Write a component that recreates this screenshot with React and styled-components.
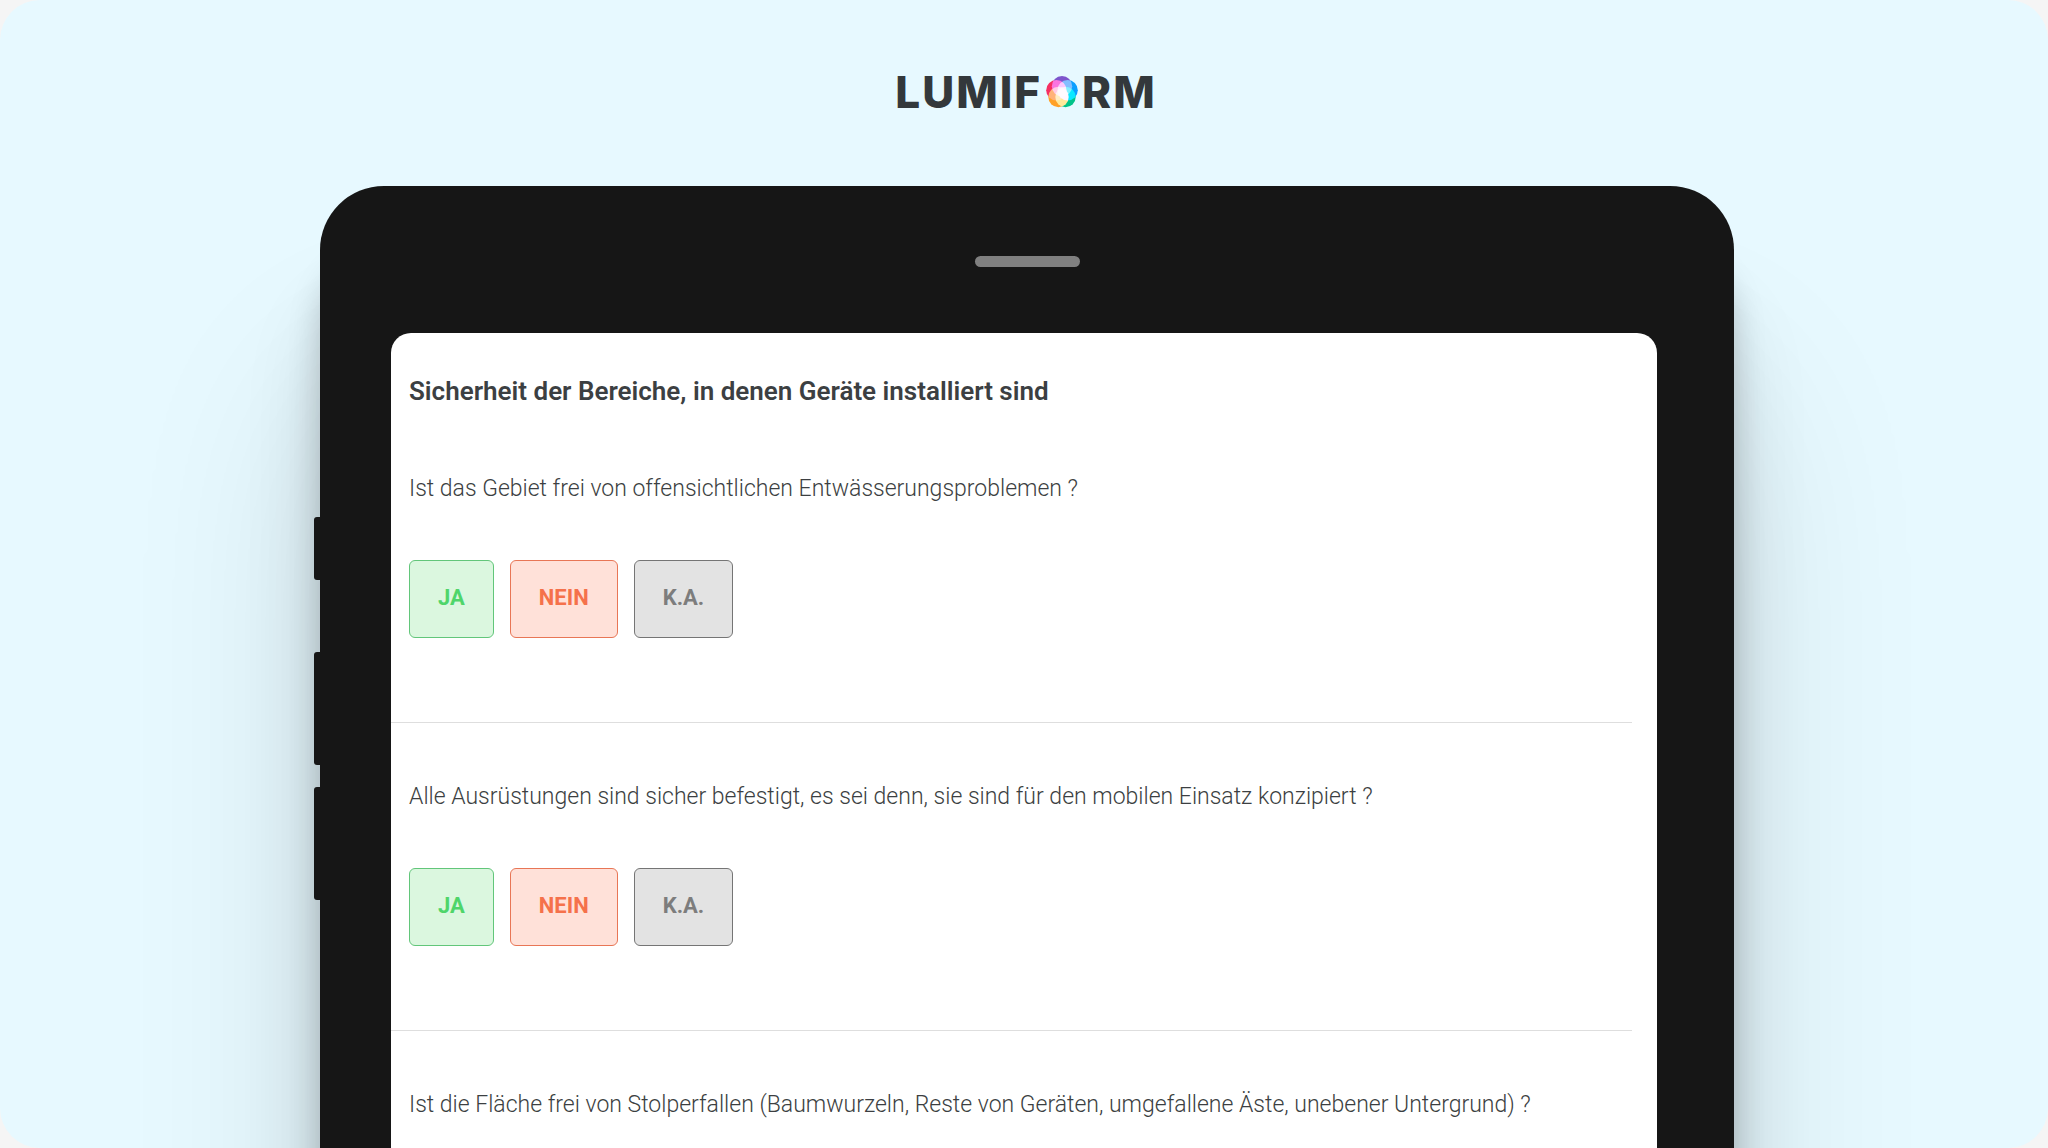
import styled, { createGlobalStyle } from "styled-components";

const questions = [
  "Ist das Gebiet frei von offensichtlichen Entwässerungsproblemen ?",
  "Alle Ausrüstungen sind sicher befestigt, es sei denn, sie sind für den mobilen Einsatz konzipiert ?",
  "Ist die Fläche frei von Stolperfallen (Baumwurzeln, Reste von Geräten, umgefallene Äste, unebener Untergrund) ?",
];

const answers = [
  { label: "JA", color: "#4fd56a", border: "#62c67a", background: "#dbf7df" },
  { label: "NEIN", color: "#f5714b", border: "#e87656", background: "#ffe1d9" },
  { label: "K.A.", color: "#7d7d7d", border: "#757575", background: "#e3e3e3" },
];

const petals = [
  { cx: 16, cy: 10.2, fill: "#7d55cc" },
  { cx: 21.6, cy: 14.2, fill: "#0a9eff" },
  { cx: 19.5, cy: 21, fill: "#00c389" },
  { cx: 12.5, cy: 21, fill: "#ffa126" },
  { cx: 10.4, cy: 14.2, fill: "#f52f62" },
];

function LogoMark() {
  return (
    <Mark viewBox="0 0 32 32" aria-hidden="true">
      {petals.map((petal) => (
        <circle key={petal.fill} r="10.2" {...petal} />
      ))}
    </Mark>
  );
}

function Question({ text, showAnswers }) {
  return (
    <QuestionBlock>
      <QuestionText>{text}</QuestionText>

      {showAnswers && (
        <Answers>
          {answers.map((answer) => (
            <AnswerButton
              key={answer.label}
              type="button"
              $color={answer.color}
              $border={answer.border}
              $background={answer.background}
            >
              {answer.label}
            </AnswerButton>
          ))}
        </Answers>
      )}
    </QuestionBlock>
  );
}

export default function App() {
  return (
    <>
      <GlobalStyle />

      <Stage>
        <Logo>
          <span>LUMIF</span>
          <LogoMark />
          <span>RM</span>
        </Logo>

        <Tablet>
          <SideKeys>
            <SideKey $height={63} />
            <SideKey $height={113} $gap={72} />
            <SideKey $height={113} $gap={22} />
          </SideKeys>

          <Speaker />

          <Screen>
            <Title>Sicherheit der Bereiche, in denen Geräte installiert sind</Title>

            {questions.map((text, index) => (
              <Question
                key={text}
                text={text}
                showAnswers={index < questions.length - 1}
              />
            ))}
          </Screen>
        </Tablet>
      </Stage>
    </>
  );
}

const GlobalStyle = createGlobalStyle`
  * {
    box-sizing: border-box;
  }

  body {
    margin: 0;
    background: #f5f5f5;
    font-family: Roboto, "Liberation Sans", sans-serif;
  }
`;

const Stage = styled.main`
  display: flex;
  flex-direction: column;
  height: 100vh;
  overflow: hidden;

  background: #e7f9ff;
  border-radius: 40px;
`;

const Logo = styled.div`
  display: flex;
  justify-content: center;
  align-items: center;
  flex-shrink: 0;
  gap: 4px;

  height: 186px;
  padding: 0 0 2px 4px;

  color: #33383b;
  font-family: Inter, sans-serif;
  font-size: 44px;
  font-weight: 800;
  letter-spacing: 2px;
`;

const Mark = styled.svg`
  width: 32px;
  height: 32px;

  isolation: isolate;

  circle {
    mix-blend-mode: screen;
  }
`;

const Tablet = styled.section`
  position: relative;
  flex-shrink: 0;

  margin: 0 314px 0 320px;
  padding-top: 70px;

  background: #161616;
  border-radius: 64px 64px 0 0;
  box-shadow:
    0 200px 200px rgba(0, 0, 0, 0.12),
    0 120px 80px rgba(0, 0, 0, 0.12),
    0 72px 32px rgba(0, 0, 0, 0.18);
`;

/* volume and power keys stick out of the left edge */
const SideKeys = styled.div`
  position: absolute;
  top: 331px;
  left: -6px;
`;

const SideKey = styled.div`
  width: 8px;
  height: ${({ $height }) => $height}px;
  margin-top: ${({ $gap = 0 }) => $gap}px;

  background: #161616;
  border-radius: 3px 0 0 3px;
`;

const Speaker = styled.div`
  width: 105px;
  height: 11px;
  margin: 0 auto 66px;

  background: #808080;
  border-radius: 6px;
`;

const Screen = styled.div`
  margin: 0 77px 0 71px;
  padding: 34px 25px 400px 0;

  background: #fff;
  border-radius: 20px 20px 0 0;
`;

const Title = styled.h1`
  margin: 0 0 0 18px;

  color: #3c3f42;
  font-size: 26px;
  font-weight: 600;
  line-height: 48px;
`;

const QuestionBlock = styled.div`
  padding: 50px 0 84px 18px;

  border-bottom: 1px solid #dedede;

  &:last-child {
    border-bottom: 0;
  }
`;

const QuestionText = styled.p`
  margin: 0;

  color: #3c3f42;
  font-size: 23px;
  font-weight: 300;
  line-height: 48px;
`;

const Answers = styled.div`
  display: flex;
  gap: 16px;

  margin-top: 47px;
`;

const AnswerButton = styled.button`
  height: 78px;
  padding: 0 28px 2px;

  color: ${({ $color }) => $color};
  background: ${({ $background }) => $background};
  border: 1px solid ${({ $border }) => $border};
  border-radius: 6px;

  font-family: inherit;
  font-size: 22px;
  font-weight: 700;
  line-height: 32px;
`;
